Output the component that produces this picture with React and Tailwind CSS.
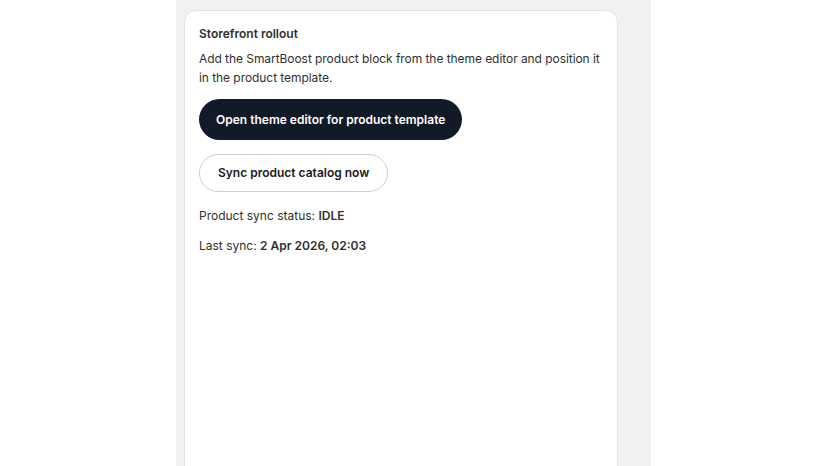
export default function App() {
  return (
    <div className="min-h-screen bg-white" style={{ fontFamily: "Inter, 'Noto Sans', sans-serif" }}>
      <div className="ml-[176px] w-[475px] min-h-[466px] bg-[#f1f1f1] pl-2 pr-[33px] pt-[10px]">
        <div className="min-h-[470px] rounded-t-xl border border-[#e3e3e3] bg-white pl-[14px] pr-[8px] pt-[13px] text-[12px] leading-5 text-[#303030]">
          <h2 className="font-semibold">Storefront rollout</h2>
          <p className="mt-[5px] leading-[19px] tracking-[-0.005em]">
            Add the SmartBoost product block from the theme editor and position it in the product template.
          </p>
          <div className="mt-[12px] flex flex-col items-start gap-[14px]">
            <button className="h-[41px] rounded-full bg-[#131a27] px-[17px] font-semibold text-white">
              Open theme editor for product template
            </button>
            <button className="h-[38px] rounded-full border border-[#cfcfcf] bg-white px-[18px] font-semibold text-[#1a1a1a]">
              Sync product catalog now
            </button>
          </div>
          <p className="mt-[14px]">
            Product sync status: <span className="font-semibold">IDLE</span>
          </p>
          <p className="mt-[10px]">
            Last sync: <span className="font-semibold">2 Apr 2026, 02:03</span>
          </p>
        </div>
      </div>
    </div>
  );
}
